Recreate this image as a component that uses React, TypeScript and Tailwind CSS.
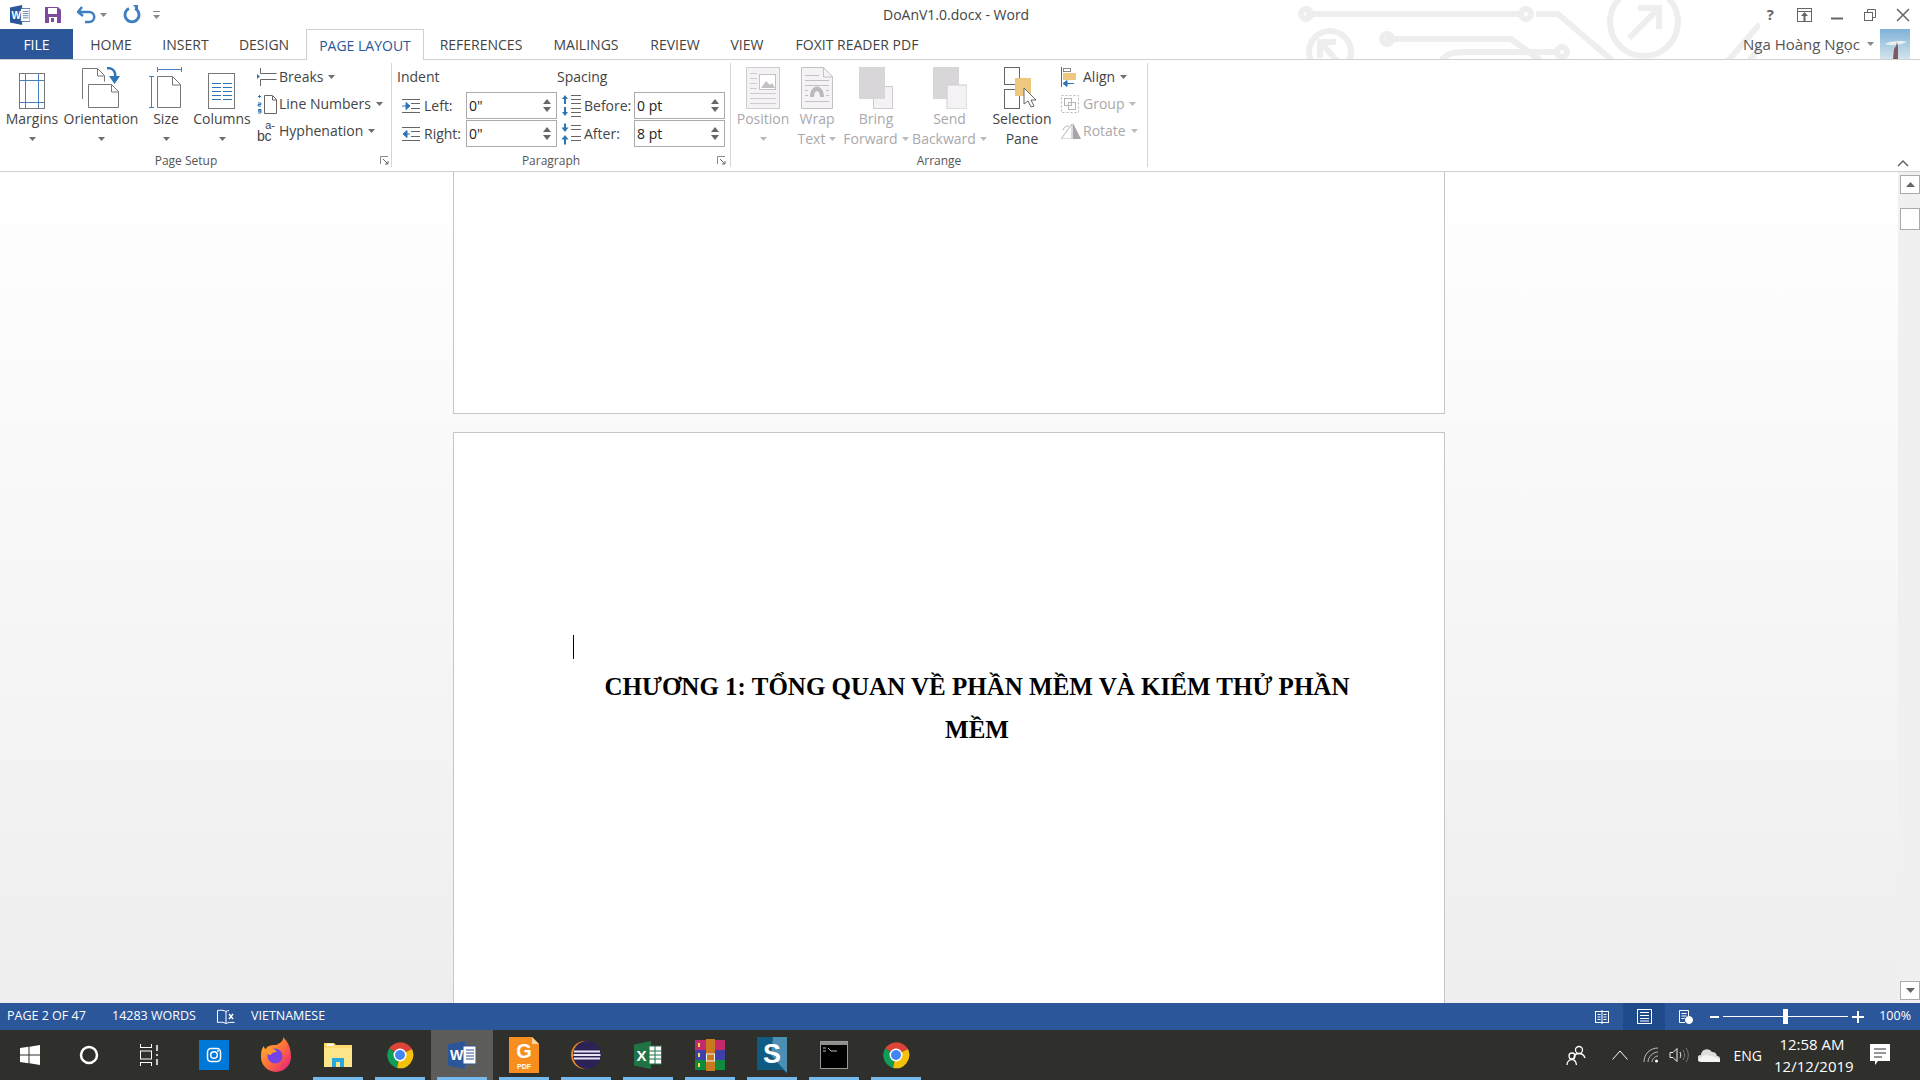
import React from 'react';

const ui = "font-['Open_Sans','Liberation_Sans',sans-serif]";

const Caret = ({ color = '#6f6f6f', className = '' }: { color?: string; className?: string }) => (
  <svg width="7" height="4" viewBox="0 0 7 4" className={className}>
    <path d="M0 0h7L3.5 4z" fill={color} />
  </svg>
);

const Launcher = () => (
  <svg width="9" height="9" viewBox="0 0 9 9" className="mb-[2px]">
    <path d="M.5 8V.5H8" stroke="#8a8a8a" fill="none" />
    <path d="M3 3l5 5M8 5v3H5" stroke="#666" fill="none" />
  </svg>
);

const MarginsIcon = () => (
  <svg width="30" height="36" viewBox="0 0 30 36">
    <rect x="2.5" y=".5" width="25" height="35" fill="#fff" stroke="#777" />
    <path d="M8.5 1v34M21.5 1v34M3 7.5h24M3 29.5h24" stroke="#4a7ebb" />
  </svg>
);

const OrientationIcon = () => (
  <svg width="40" height="42" viewBox="0 0 40 42">
    <path d="M1.5 32V1.5h15l7 7v6" fill="#fff" stroke="#777" />
    <path d="M16.5 2v7h7" fill="none" stroke="#777" />
    <path d="M7.5 17.5h23l7 7v16h-30z" fill="#fff" stroke="#777" />
    <path d="M30.5 18v7h7" fill="none" stroke="#777" />
    <path d="M26 1c7 0 9 4 8 11" fill="none" stroke="#2e75b6" strokeWidth="2.5" />
    <path d="M28 9h11l-5.500 8z" fill="#2e75b6" />
  </svg>
);

const SizeIcon = () => (
  <svg width="34" height="42" viewBox="0 0 34 42">
    <path d="M8.500 2.500h24M8.500 0v5M32.500 0v5M2.500 10v31M0 9.500h5M0 40.500h5" stroke="#4a7ebb" />
    <path d="M8.500 9.500h15l8 8v23h-23z" fill="#fff" stroke="#777" />
    <path d="M23.500 10v8h8" fill="none" stroke="#777" />
  </svg>
);

const ColumnsIcon = () => (
  <svg width="28" height="36" viewBox="0 0 28 36">
    <rect x=".5" y=".5" width="26" height="35" fill="#fff" stroke="#777" />
    <path d="M4 10.500h9M15 10.500h9M4 14.500h9M15 14.500h9M4 18.500h9M15 18.500h9M4 22.500h9M15 22.500h9M4 26.500h9M15 26.500h9" stroke="#2e75b6" />
  </svg>
);

const BreaksIcon = () => (
  <svg width="20" height="18" viewBox="0 0 20 18">
    <path d="M3.500 0v5.500h16M3.500 18v-6.500h16" fill="none" stroke="#666" />
    <path d="M0 6v5l3-2.500z" fill="#2e75b6" />
  </svg>
);

const LineNumbersIcon = () => (
  <svg width="20" height="20" viewBox="0 0 20 20">
    <path d="M7.500 1.500h8l4 4v14h-12z" fill="#fff" stroke="#666" />
    <path d="M15.500 2v4h4" fill="none" stroke="#666" />
    <path d="M1 2.500h3M2.500 1v3M1 9h3v1.500H1V12h3M1 15.500h3V17H1h3v2H1" fill="none" stroke="#2e75b6" />
  </svg>
);

const HyphenIcon = () => (
  <div className="w-[18px] h-[22px] flex flex-col items-end text-[#444] font-['Liberation_Sans',sans-serif]">
    <span className="text-[11px] leading-[10px]">a-</span>
    <span className="self-start text-[14px] leading-[12px] tracking-tight">bc</span>
  </div>
);

const IndentIcon = ({ dir }: { dir: 'left' | 'right' }) => (
  <svg width="18" height="14" viewBox="0 0 18 14">
    <path d="M0 .5h18M0 13.500h18M9 4.500h9M9 9.500h9" stroke="#666" />
    {dir === 'left' ? <path d="M0 7h6M4 3.500L8 7l-4 3.500z" stroke="#2e75b6" fill="#2e75b6" /> : <path d="M8 7H3M5 3.500L1 7l4 3.500z" stroke="#2e75b6" fill="#2e75b6" />}
  </svg>
);

const SpacingIcon = ({ before }: { before: boolean }) => (
  <svg width="20" height="22" viewBox="0 0 20 22">
    <path d={before ? 'M10 .5h10M10 4.500h10M10 8.500h10M10 13.500h10M10 17.500h10M10 21.500h10' : 'M10 2.500h10M10 6.500h10M10 13.500h10M10 17.500h10'} stroke="#666" />
    <path d={before ? 'M1 4l3-4 3 4H5v5H3V4zM1 17h2v-5h2v5h2l-3 4z' : 'M3 .5h2v4h2.500L4 9 .500 4.500H3zM4 12l3.500 4.500H5v5H3v-5H.500z'} fill="#2e75b6" />
  </svg>
);

const Spin = () => (
  <div className="flex flex-col gap-[3px] items-center">
    <svg width="8" height="5" viewBox="0 0 8 5"><path d="M4 0l4 5H0z" fill="#666" /></svg>
    <svg width="8" height="5" viewBox="0 0 8 5"><path d="M4 5l4-5H0z" fill="#666" /></svg>
  </div>
);

const PositionIcon = () => (
  <svg width="34" height="42" viewBox="0 0 34 42">
    <rect x=".5" y=".5" width="33" height="41" fill="#f4f2f5" stroke="#cfcbd1" />
    <path d="M4 6.500h7M4 11.500h7M4 16.500h7M4 21.500h7M4 26.500h26M4 31.500h26M4 36.500h26" stroke="#cfcbd1" />
    <rect x="13.500" y="7.500" width="16" height="15" fill="#fff" stroke="#c4c0c6" />
    <path d="M15 21l5-7 4 4 2-2 3 5z" fill="#c4c0c6" />
  </svg>
);

const WrapIcon = () => (
  <svg width="32" height="42" viewBox="0 0 32 42">
    <path d="M.5.500h22l9 9v32H.5z" fill="#f4f2f5" stroke="#c4c0c6" />
    <path d="M22.500 1v9h9" fill="none" stroke="#c4c0c6" />
    <path d="M4 8.500h14M4 13.500h24M4 18.500h24M4 34.500h24M4 23.500h3M25 23.500h3M4 28.500h3M25 28.500h3" stroke="#c4c0c6" />
    <path d="M9 30c0-14 14-14 14 0h-4c0-8-6-8-6 0z" fill="#bdb9bf" />
  </svg>
);

const ForwardIcon = ({ back }: { back?: boolean }) => (
  <svg width="34" height="42" viewBox="0 0 34 42">
    {back ? null : <rect x="14.500" y="19.500" width="19" height="22" fill="#f4f2f5" stroke="#cfcbd1" />}
    <rect x="0" y="0" width="26" height="32" fill="#d9d6da" />
    {back ? <rect x="14" y="18" width="20" height="24" fill="#f4f2f5" stroke="#cfcbd1" /> : null}
  </svg>
);

const SelectionIcon = () => (
  <svg width="36" height="42" viewBox="0 0 36 42">
    <rect x=".5" y=".5" width="15" height="17" fill="#fff" stroke="#666" />
    <rect x=".5" y="22.500" width="15" height="19" fill="#fff" stroke="#666" />
    <rect x="11" y="11" width="16" height="18" fill="#edc87e" />
    <path d="M20 21v16l4-3 3 6 3-1-3-6h5z" fill="#fff" stroke="#666" />
  </svg>
);

const AlignIcon = () => (
  <svg width="16" height="20" viewBox="0 0 16 20">
    <path d="M.5 0v20" stroke="#666" />
    <rect x="2.500" y="1.500" width="7" height="3" fill="#fff" stroke="#888" />
    <rect x="2" y="6" width="13" height="7" fill="#edc87e" />
    <path d="M3 16.500h10M2 16.500l4-3v6z" stroke="#2e75b6" fill="#2e75b6" />
  </svg>
);

const GroupIcon = () => (
  <svg width="18" height="18" viewBox="0 0 18 18" fill="none" stroke="#b8b4ba">
    <rect x=".5" y=".5" width="17" height="17" strokeDasharray="2 2" />
    <rect x="3.500" y="3.500" width="7" height="7" />
    <rect x="7.500" y="7.500" width="7" height="7" />
  </svg>
);

const RotateIcon = () => (
  <svg width="20" height="16" viewBox="0 0 20 16">
    <path d="M11 1v15H0z" fill="#fff" stroke="#b8b4ba" />
    <path d="M12 0l8 16h-8z" fill="#a9a5ab" />
    <path d="M2 7c1-3 3-4 6-4" fill="none" stroke="#b8b4ba" />
  </svg>
);

const ChromeLogo = () => (
  <svg width="28" height="28" viewBox="0 0 28 28">
    <path d="M14 14L3 7.500A13.500 13.500 0 0 1 26 8z" fill="#db4437" />
    <path d="M14 14L3 7.500A13.500 13.500 0 0 0 11 27z" fill="#0f9d58" />
    <path d="M14 14L26 8A13.500 13.500 0 0 1 11 27z" fill="#f4c20d" />
    <circle cx="14" cy="14" r="6.500" fill="#fff" />
    <circle cx="14" cy="14" r="5" fill="#4285f4" />
  </svg>
);

const WordLogo = ({ size = 28 }: { size?: number }) => (
  <svg width={size} height={size} viewBox="0 0 28 28">
    <path d="M0 3.500L17 0v28L0 24.500z" fill="#2b579a" />
    <rect x="15" y="5" width="13" height="18" fill="#fff" stroke="#2b579a" />
    <path d="M18 9h8M18 12h8M18 15h8M18 18h8" stroke="#2b579a" />
    <text x="2" y="19" fontSize="14" fontWeight="700" fill="#fff" fontFamily="'Liberation Sans',sans-serif">W</text>
  </svg>
);

const taskIcons: { key: string; on?: boolean; active?: boolean; node: React.ReactNode }[] = [
  {
    key: 'outlook',
    node: (
      <svg width="30" height="30" viewBox="0 0 30 30">
        <rect width="30" height="30" fill="#0078d7" />
        <rect x="8.500" y="8.500" width="13" height="13" rx="3.500" fill="none" stroke="#fff" strokeWidth="1.500" />
        <circle cx="15" cy="15" r="3.300" fill="none" stroke="#fff" strokeWidth="1.500" />
        <circle cx="19" cy="11" r=".9" fill="#fff" />
      </svg>
    ),
  },
  {
    key: 'firefox',
    node: (
      <svg width="30" height="36" viewBox="0 0 30 36">
        <defs>
          <linearGradient id="ffg" x1="0" y1="0" x2="1" y2="1">
            <stop offset="0" stopColor="#ffc22e" />
            <stop offset=".5" stopColor="#ff7139" />
            <stop offset="1" stopColor="#e31587" />
          </linearGradient>
        </defs>
        <path d="M15 8C20 6 23 3 22 0c6 6 8 12 8 20a15 15 0 0 1-30 0c0-6 1-9 3-11 0 2 1 3 2 3 1-3 4-4 10-4z" fill="url(#ffg)" />
        <circle cx="14" cy="19" r="7.500" fill="#7542e5" />
        <path d="M3 13c4-3 11-2 13 2-3 0-6 1-6 3-3 0-5-2-7-5z" fill="#ff9a2e" />
      </svg>
    ),
  },
  {
    key: 'explorer',
    on: true,
    node: (
      <svg width="28" height="28" viewBox="0 0 28 28">
        <path d="M0 2h10l2 2h16v22H0z" fill="#ffd86f" />
        <path d="M0 7h28v19H0z" fill="#fde68a" />
        <rect x="3" y="3" width="6" height="2" fill="#fff" />
        <path d="M8 26v-9h12v9h-4v-5h-4v5z" fill="#29a8e0" />
      </svg>
    ),
  },
  { key: 'chrome1', on: true, node: <ChromeLogo /> },
  { key: 'word', on: true, active: true, node: <WordLogo size={28} /> },
  {
    key: 'foxit',
    on: true,
    node: (
      <svg width="30" height="36" viewBox="0 0 30 36">
        <path d="M0 0h23l7 7v29H0z" fill="#f78e1e" />
        <path d="M23 0v7h7z" fill="#fcd29c" />
        <text x="15" y="21" textAnchor="middle" fontSize="20" fontWeight="700" fill="#fff" fontFamily="'Liberation Sans',sans-serif">G</text>
        <text x="15" y="32" textAnchor="middle" fontSize="7" fontWeight="700" fill="#fff" fontFamily="'Liberation Sans',sans-serif">PDF</text>
      </svg>
    ),
  },
  {
    key: 'eclipse',
    on: true,
    node: (
      <svg width="30" height="32" viewBox="0 0 30 32">
        <circle cx="14" cy="16" r="14" fill="#e58a22" />
        <circle cx="16" cy="16" r="14" fill="#2c2255" />
        <path d="M3 12.500h26M2.500 16h27M3 19.500h26" stroke="#e8e4f4" strokeWidth="2" />
      </svg>
    ),
  },
  {
    key: 'excel',
    on: true,
    node: (
      <svg width="28" height="28" viewBox="0 0 28 28">
        <path d="M0 3.500L17 0v28L0 24.500z" fill="#217346" />
        <rect x="15" y="5" width="12.500" height="18" fill="#fff" stroke="#217346" />
        <path d="M21 5v18M15 10h12M15 14h12M15 18h12" stroke="#217346" />
        <text x="2.500" y="19.500" fontSize="15" fontWeight="700" fill="#fff" fontFamily="'Liberation Sans',sans-serif">X</text>
      </svg>
    ),
  },
  {
    key: 'winrar',
    on: true,
    node: (
      <svg width="30" height="32" viewBox="0 0 30 32">
        <rect y="1" width="30" height="10" fill="#c52a6b" />
        <rect y="11" width="30" height="10" fill="#3f3fa8" />
        <rect y="21" width="30" height="10" fill="#108a3c" />
        <rect x="11" y="0" width="9" height="32" fill="#c77a1e" />
        <path d="M4 4v4M4 14v4M4 24v4" stroke="#f6e04b" strokeWidth="2" />
        <rect x="11.500" y="15" width="8" height="7" fill="none" stroke="#eee" />
      </svg>
    ),
  },
  {
    key: 'snagit',
    on: true,
    node: (
      <svg width="30" height="36" viewBox="0 0 30 36">
        <path d="M0 0h30v36l-4-3H0z" fill="#0f5b82" />
        <path d="M16 0h14v36L14 18z" fill="#4b8fb3" />
        <text x="15" y="26" textAnchor="middle" fontSize="27" fontWeight="700" fill="#fff" fontFamily="'Liberation Sans',sans-serif">S</text>
      </svg>
    ),
  },
  {
    key: 'cmd',
    on: true,
    node: (
      <svg width="28" height="28" viewBox="0 0 28 28">
        <rect x=".5" y=".5" width="27" height="27" fill="#000" stroke="#9a9a9a" />
        <rect x="1" y="1" width="26" height="3" fill="#8e8e8e" />
        <path d="M3 7h3M3 10h3M8 7l3 3M11 10h6" stroke="#bbb" />
      </svg>
    ),
  },
  { key: 'chrome2', on: true, node: <ChromeLogo /> },
];

const BigButton = ({ width, icon, label, label2, disabled, caret = true }: {
  width: string; icon: React.ReactNode; label: string; label2?: string; disabled?: boolean; caret?: boolean;
}) => (
  <div className={`${width} flex flex-col items-center shrink-0 ${disabled ? 'text-[#aaa8ab]' : 'text-[#444]'}`}>
    <div className="h-[44px] flex items-end justify-center">{icon}</div>
    <div className="text-[14px] leading-[20px] whitespace-nowrap">{label}</div>
    {label2 ? (
      <div className="text-[14px] leading-[20px] whitespace-nowrap flex items-center gap-[4px]">
        {label2}
        {caret ? <Caret color={disabled ? '#bbb' : '#6f6f6f'} /> : null}
      </div>
    ) : caret ? (
      <div className="h-[20px] flex items-center"><Caret color={disabled ? '#bbb' : '#6f6f6f'} /></div>
    ) : null}
  </div>
);

const SmallButton = ({ icon, label, disabled }: { icon: React.ReactNode; label: string; disabled?: boolean }) => (
  <div className={`h-[27px] flex items-center whitespace-nowrap text-[14px] ${disabled ? 'text-[#aaa8ab]' : 'text-[#444]'}`}>
    <div className="w-[21px] flex justify-start">{icon}</div>
    <span className="ml-[1px]">{label}</span>
    <Caret className="ml-[5px]" color={disabled ? '#bbb' : '#6f6f6f'} />
  </div>
);

const SpinBox = ({ value }: { value: string }) => (
  <div className="w-[91px] h-[27px] border border-[#ababab] bg-white flex items-center justify-between pl-[2px] pr-[5px] text-[14px] text-[#222]">
    <span>{value}</span>
    <Spin />
  </div>
);

const GroupLabel = ({ children }: { children: string }) => (
  <div className="h-[13px] text-[12px] leading-[13px] text-[#555] text-center">{children}</div>
);

const tabs = [
  { name: 'HOME', w: 'w-[76px]' },
  { name: 'INSERT', w: 'w-[73px]' },
  { name: 'DESIGN', w: 'w-[84px]' },
];
const tabsAfter = [
  { name: 'REFERENCES', w: 'w-[114px]' },
  { name: 'MAILINGS', w: 'w-[96px]' },
  { name: 'REVIEW', w: 'w-[82px]' },
  { name: 'VIEW', w: 'w-[62px]' },
  { name: 'FOXIT READER PDF', w: 'w-[158px]' },
];

export default function App() {
  return (
    <div className={`${ui} w-[1920px] h-[1080px] flex flex-col overflow-hidden bg-white`}>
      {/* title bar */}
      <div className="relative h-[29px] shrink-0 flex items-center pl-[10px]">
        <WordLogo size={20} />
        <svg width="18" height="18" viewBox="0 0 18 18" className="ml-[14px]">
          <path d="M1 1h13l3 3v13H1z" fill="#7e4a9e" />
          <rect x="4" y="2" width="9" height="6" fill="#fff" />
          <rect x="5" y="11" width="8" height="6" fill="#fff" />
          <rect x="7" y="12" width="3" height="4" fill="#7e4a9e" />
        </svg>
        <svg width="20" height="18" viewBox="0 0 20 18" className="ml-[15px]">
          <path d="M5 1L1 6l5 4M2 6h10c7 0 7 10 0 10H8" fill="none" stroke="#3f7fbf" strokeWidth="2.500" />
        </svg>
        <Caret className="ml-[3px]" color="#888" />
        <svg width="20" height="20" viewBox="0 0 20 20" className="ml-[15px]">
          <path d="M7 3.500a7 7 0 1 0 6 0" fill="none" stroke="#3f7fbf" strokeWidth="2.800" />
          <path d="M11 0h5v6z" fill="#3f7fbf" />
        </svg>
        <svg width="7" height="8" viewBox="0 0 7 8" className="ml-[11px]">
          <path d="M0 .5h7" stroke="#888" />
          <path d="M0 4h7L3.500 8z" fill="#888" />
        </svg>

        <div className="absolute left-[883px] top-0 h-[29px] flex items-center text-[14px] text-[#444] whitespace-nowrap">DoAnV1.0.docx - Word</div>

        {/* circuit decoration */}
        <svg width="480" height="60" viewBox="0 0 480 60" className="absolute left-[1280px] top-0" fill="none" stroke="#eeeeee" strokeWidth="6">
          <path d="M26 14h216M256 14h22l70 60" />
          <circle cx="26" cy="14" r="5" />
          <circle cx="246" cy="14" r="5" />
          <path d="M106 39h125l30 22" />
          <circle cx="107" cy="39" r="5" />
          <circle cx="50" cy="52" r="21" />
          <path d="M40 58V42h16M41 43l18 20" />
          <circle cx="364" cy="22" r="34" />
          <path d="M349 38l30-30M358 8h21v21" />
          <path d="M160 62c6-8 12-10 25-10h90" />
          <circle cx="282" cy="52" r="5" />
          <path d="M440 70l40-46M470 60l30-40" />
        </svg>

        <div className="ml-auto relative flex items-center text-[#666] pr-[10px]">
          <span className="text-[15px] font-bold mr-[23px]">?</span>
          <svg width="15" height="14" viewBox="0 0 15 14" className="mr-[19px]">
            <rect x=".5" y=".5" width="14" height="13" fill="none" stroke="#666" />
            <path d="M1 3.500h13" stroke="#666" />
            <path d="M7.500 4L4 8h2.500v5h2V8H11z" fill="#666" />
          </svg>
          <svg width="12" height="12" viewBox="0 0 12 12" className="mr-[21px]"><path d="M0 9.500h12" stroke="#666" strokeWidth="2" /></svg>
          <svg width="12" height="12" viewBox="0 0 12 12" fill="none" stroke="#666" className="mr-[20px]">
            <rect x=".5" y="3.500" width="8" height="8" />
            <path d="M3.500 3V.5h8v8H9" />
          </svg>
          <svg width="14" height="14" viewBox="0 0 14 14"><path d="M1 1l12 12M13 1L1 13" stroke="#666" strokeWidth="1.500" /></svg>
        </div>
      </div>

      {/* tabs */}
      <div className="h-[31px] shrink-0 flex border-b border-[#d0d0d0] text-[14px] text-[#444] relative">
        <div className="w-[73px] h-[30px] bg-[#2b579a] text-white flex items-center justify-center">FILE</div>
        {tabs.map((t) => (
          <div key={t.name} className={`${t.w} flex items-center justify-center`}>{t.name}</div>
        ))}
        <div className="w-[118px] h-[31px] bg-white border border-b-0 border-[#d0d0d0] text-[#2b579a] flex items-center justify-center z-10">PAGE LAYOUT</div>
        {tabsAfter.map((t) => (
          <div key={t.name} className={`${t.w} flex items-center justify-center`}>{t.name}</div>
        ))}
        <div className="ml-auto flex items-center pr-[10px]">
          <span className="text-[15px] text-[#555]">Nga Hoàng Ngọc</span>
          <Caret className="ml-[7px] mr-[6px]" color="#888" />
          <svg width="30" height="30" viewBox="0 0 30 30">
            <defs>
              <linearGradient id="sky" x1="0" y1="0" x2="0" y2="1">
                <stop offset="0" stopColor="#7fb1d8" />
                <stop offset="1" stopColor="#d4e4ec" />
              </linearGradient>
            </defs>
            <rect width="30" height="30" fill="url(#sky)" />
            <path d="M5 15c4-3 18-4 22-2-5 3-16 4-22 2z" fill="#e8f0f2" />
            <path d="M13 30l1-10 2-3 1-4 1 5v12z" fill="#7b5a60" />
          </svg>
        </div>
      </div>

      {/* ribbon */}
      <div className="h-[112px] shrink-0 flex border-b border-[#d0d0d0]">
        <div className="w-[392px] h-[104px] mt-[3px] border-r border-[#d6d6d6] flex flex-col">
          <div className="h-[91px] flex pt-[2px]">
            <BigButton width="w-[64px]" icon={<MarginsIcon />} label="Margins" />
            <BigButton width="w-[74px]" icon={<OrientationIcon />} label="Orientation" />
            <BigButton width="w-[56px]" icon={<SizeIcon />} label="Size" />
            <BigButton width="w-[56px]" icon={<ColumnsIcon />} label="Columns" />
            <div className="ml-[7px] -mt-[2px] flex flex-col">
              <SmallButton icon={<BreaksIcon />} label="Breaks" />
              <SmallButton icon={<LineNumbersIcon />} label="Line Numbers" />
              <SmallButton icon={<HyphenIcon />} label="Hyphenation" />
            </div>
          </div>
          <div className="flex-1 flex items-end">
            <div className="w-[372px]"><GroupLabel>Page Setup</GroupLabel></div>
            <div className="ml-[8px]"><Launcher /></div>
          </div>
        </div>

        <div className="w-[339px] h-[104px] mt-[3px] border-r border-[#d6d6d6] flex flex-col">
          <div className="h-[91px] flex flex-col pl-[5px] text-[14px] text-[#444]">
            <div className="h-[25px] flex items-center pt-[2px]">
              <span className="w-[160px]">Indent</span>
              <span>Spacing</span>
            </div>
            <div className="flex items-center h-[27px] mt-[4px] ml-[5px]">
              <IndentIcon dir="left" />
              <span className="ml-[4px] w-[42px]">Left:</span>
              <SpinBox value={'0"'} />
              <div className="ml-[4px]"><SpacingIcon before /></div>
              <span className="ml-[3px] w-[50px]">Before:</span>
              <SpinBox value="0 pt" />
            </div>
            <div className="flex items-center h-[27px] mt-[1px] ml-[5px]">
              <IndentIcon dir="right" />
              <span className="ml-[4px] w-[42px]">Right:</span>
              <SpinBox value={'0"'} />
              <div className="ml-[4px]"><SpacingIcon before={false} /></div>
              <span className="ml-[3px] w-[50px]">After:</span>
              <SpinBox value="8 pt" />
            </div>
          </div>
          <div className="flex-1 flex items-end">
            <div className="w-[320px] pr-[2px]"><GroupLabel>Paragraph</GroupLabel></div>
            <div className="ml-[5px]"><Launcher /></div>
          </div>
        </div>

        <div className="w-[417px] h-[104px] mt-[3px] border-r border-[#d6d6d6] flex flex-col">
          <div className="h-[91px] flex pt-[2px] pl-[1px]">
            <BigButton width="w-[62px]" disabled icon={<PositionIcon />} label="Position" />
            <BigButton width="w-[46px]" disabled icon={<WrapIcon />} label="Wrap" label2="Text" />
            <BigButton width="w-[72px]" disabled icon={<ForwardIcon />} label="Bring" label2="Forward" />
            <BigButton width="w-[75px]" disabled icon={<ForwardIcon back />} label="Send" label2="Backward" />
            <BigButton width="w-[70px]" caret={false} icon={<SelectionIcon />} label="Selection" label2="Pane" />
            <div className="ml-[4px] -mt-[2px] flex flex-col">
              <SmallButton icon={<AlignIcon />} label="Align" />
              <SmallButton disabled icon={<GroupIcon />} label="Group" />
              <SmallButton disabled icon={<RotateIcon />} label="Rotate" />
            </div>
          </div>
          <div className="flex-1 flex items-end justify-center">
            <GroupLabel>Arrange</GroupLabel>
          </div>
        </div>

        <div className="flex-1 flex items-end justify-end pr-[11px] pb-[4px]">
          <svg width="12" height="8" viewBox="0 0 12 8"><path d="M1 7l5-5 5 5" fill="none" stroke="#666" strokeWidth="1.500" /></svg>
        </div>
      </div>

      {/* document */}
      <div className="flex-1 min-h-0 flex bg-gradient-to-b from-white to-[#eeeeee]">
        <div className="flex-1 min-w-0 flex flex-col items-center overflow-hidden">
          <div className="w-[992px] h-[242px] shrink-0 bg-white border-x border-b border-[#c6c6c6]" />
          <div className="w-[992px] flex-1 min-h-0 mt-[18px] bg-white border-x border-t border-[#c6c6c6] pt-[202px] pl-[119px] font-['Liberation_Serif',serif]">
            <div className="w-px h-[24px] bg-black" />
            <h1 className="mt-[6px] ml-[9px] w-[790px] text-center text-[25px] leading-[43px] font-bold text-black">
              CHƯƠNG 1: TỔNG QUAN VỀ PHẦN MỀM VÀ KIỂM THỬ PHẦN MỀM
            </h1>
          </div>
        </div>
        <div className="w-[22px] shrink-0 bg-[#f0f0f0] flex flex-col items-end">
          <div className="w-[20px] h-[19px] mt-[3px] bg-white border border-[#ababab] flex items-center justify-center">
            <svg width="9" height="5" viewBox="0 0 9 5"><path d="M4.500 0L9 5H0z" fill="#666" /></svg>
          </div>
          <div className="w-[20px] h-[22px] mt-[14px] bg-white border border-[#ababab]" />
          <div className="w-[20px] h-[19px] mt-auto mb-[3px] bg-white border border-[#ababab] flex items-center justify-center">
            <svg width="9" height="5" viewBox="0 0 9 5"><path d="M4.500 5L9 0H0z" fill="#666" /></svg>
          </div>
        </div>
      </div>

      {/* status bar */}
      <div className="h-[27px] shrink-0 bg-[#2b579a] text-white text-[12.5px] flex items-center pl-[7px]">
        <span className="w-[105px]">PAGE 2 OF 47</span>
        <span className="w-[105px]">14283 WORDS</span>
        <svg width="18" height="16" viewBox="0 0 18 16" fill="none" stroke="#fff">
          <path d="M9 2.500C7 1 3 1 .5 1.500v12c3-.5 6-.5 8.500 1V2.500zM9 2.500c1-.5 2-1 3-1M9 14.500c2-1 5-1.500 8.500-1" />
          <path d="M12 5l4 5M16 5l-4 5" strokeWidth="1.500" />
        </svg>
        <span className="ml-[16px]">VIETNAMESE</span>
        <div className="ml-auto flex items-center h-full">
          <svg width="14" height="14" viewBox="0 0 14 14" fill="none" stroke="#fff" className="mr-[14px]">
            <rect x=".5" y="1.500" width="13" height="11" />
            <path d="M7 0v14M2.500 4.500h3M2.500 7h3M2.500 9.500h3M8.500 4.500h3M8.500 7h3M8.500 9.500h3" />
          </svg>
          <div className="w-[42px] h-full bg-[#1f4a8c] flex items-center justify-center">
            <svg width="15" height="15" viewBox="0 0 15 15" fill="none" stroke="#fff">
              <rect x=".5" y=".5" width="14" height="14" />
              <path d="M3 3.500h9M3 6.500h9M3 9.500h9M3 12h9" />
            </svg>
          </div>
          <svg width="14" height="14" viewBox="0 0 14 14" fill="none" stroke="#fff" className="ml-[14px]">
            <path d="M9.500 6V.5h-9v12H6M2.500 3.500h5M2.500 6h5M2.500 8.500h3" />
            <circle cx="10" cy="10" r="3.500" fill="#fff" />
          </svg>
          <div className="ml-[17px] w-[9px] h-[2px] bg-white" />
          <div className="relative ml-[4px] w-[125px] h-px bg-white">
            <div className="absolute left-[60px] -top-[7px] w-[5px] h-[15px] bg-white" />
          </div>
          <svg width="12" height="12" viewBox="0 0 12 12" className="ml-[4px]"><path d="M6 0v12M0 6h12" stroke="#fff" strokeWidth="2" /></svg>
          <span className="ml-[15px] mr-[9px]">100%</span>
        </div>
      </div>

      {/* taskbar */}
      <div className="h-[50px] shrink-0 bg-[#2f2f2c] flex items-center text-white">
        <div className="w-[60px] flex justify-center">
          <svg width="20" height="20" viewBox="0 0 20 20"><path d="M0 3l8.500-1.200V9.500H0zM9.500 1.700L20 0v9.500H9.500zM0 10.500h8.500v7.700L0 17zM9.500 10.500H20V20L9.500 18.300z" fill="#fff" /></svg>
        </div>
        <div className="w-[58px] flex justify-center">
          <svg width="20" height="20" viewBox="0 0 20 20"><circle cx="10" cy="10" r="8" fill="none" stroke="#fff" strokeWidth="2.500" /></svg>
        </div>
        <div className="w-[65px] flex justify-center pr-[3px]">
          <svg width="20" height="22" viewBox="0 0 20 22" fill="none" stroke="#fff">
            <path d="M1 3.500h12M1 18.500h12M1.500 0v3.500M12.500 0v3.500M1.500 22v-3.500M12.500 22v-3.500" />
            <rect x="1.500" y="7" width="11" height="8" />
            <path d="M18 1v6M18 10v2M18 15v6" strokeWidth="1.500" />
          </svg>
        </div>
        {taskIcons.map((t) => (
          <div key={t.key} className={`relative w-[62px] h-full flex items-center justify-center ${t.active ? 'bg-[#5c5c5a]' : ''}`}>
            {t.node}
            {t.on ? <div className="absolute bottom-0 left-[6px] right-[6px] h-[3px] bg-[#76b9ed]" /> : null}
          </div>
        ))}
        <div className="ml-auto flex items-center pr-[30px]">
          <svg width="20" height="20" viewBox="0 0 20 20" fill="none" stroke="#fff" strokeWidth="1.300">
            <circle cx="13" cy="5" r="3.500" />
            <path d="M8 13c0-3 2-4.500 5-4.500s5 1.500 6 4.500" />
            <circle cx="6" cy="11" r="3" />
            <path d="M1 20c0-3 2-5.500 5-5.500s4 2 4.500 5.500" />
          </svg>
          <svg width="16" height="10" viewBox="0 0 16 10" className="ml-[26px]"><path d="M.5 9.500L8 1l7.500 8.500" fill="none" stroke="#fff" /></svg>
          <svg width="16" height="16" viewBox="0 0 16 16" fill="none" stroke="#bbb" className="ml-[15px]">
            <path d="M1 15C1 7 7 1 15 1M5 15c0-5 5-10 10-10M9 15c0-3 3-6 6-6" />
            <circle cx="13.500" cy="14" r="1.500" fill="#fff" stroke="none" />
          </svg>
          <svg width="20" height="16" viewBox="0 0 20 16" fill="none" stroke="#eee" className="ml-[10px]">
            <path d="M1 5.500h3l4-4v13l-4-4H1z" />
            <path d="M11 5c1 2 1 4 0 6" />
            <path d="M14 3c2 3 2 7 0 10M17 1c3 4 3 10 0 14" stroke="#777" />
          </svg>
          <svg width="22" height="14" viewBox="0 0 22 14" className="ml-[9px]">
            <path d="M3 14a3 3 0 0 1 0-7 6 6 0 0 1 11-3 5 5 0 0 1 5 4 3 3 0 0 1 0 6z" fill="#ddd" />
            <path d="M0 11l7-4 6 1 9 3v3H3z" fill="#f5f5f5" />
          </svg>
          <span className="ml-[14px] text-[14px]">ENG</span>
          <div className="ml-[12px] w-[76px] text-center text-[15px] leading-[22px] whitespace-nowrap">
            <div>12:58 AM</div>
            <div>12/12/2019</div>
          </div>
          <svg width="20" height="22" viewBox="0 0 20 22" className="ml-[20px]">
            <path d="M0 0h20v17H8l-3 4v-4H0z" fill="#fff" />
            <path d="M4 5h12M4 9h12M4 13h8" stroke="#2f2f2c" />
          </svg>
        </div>
      </div>
    </div>
  );
}
